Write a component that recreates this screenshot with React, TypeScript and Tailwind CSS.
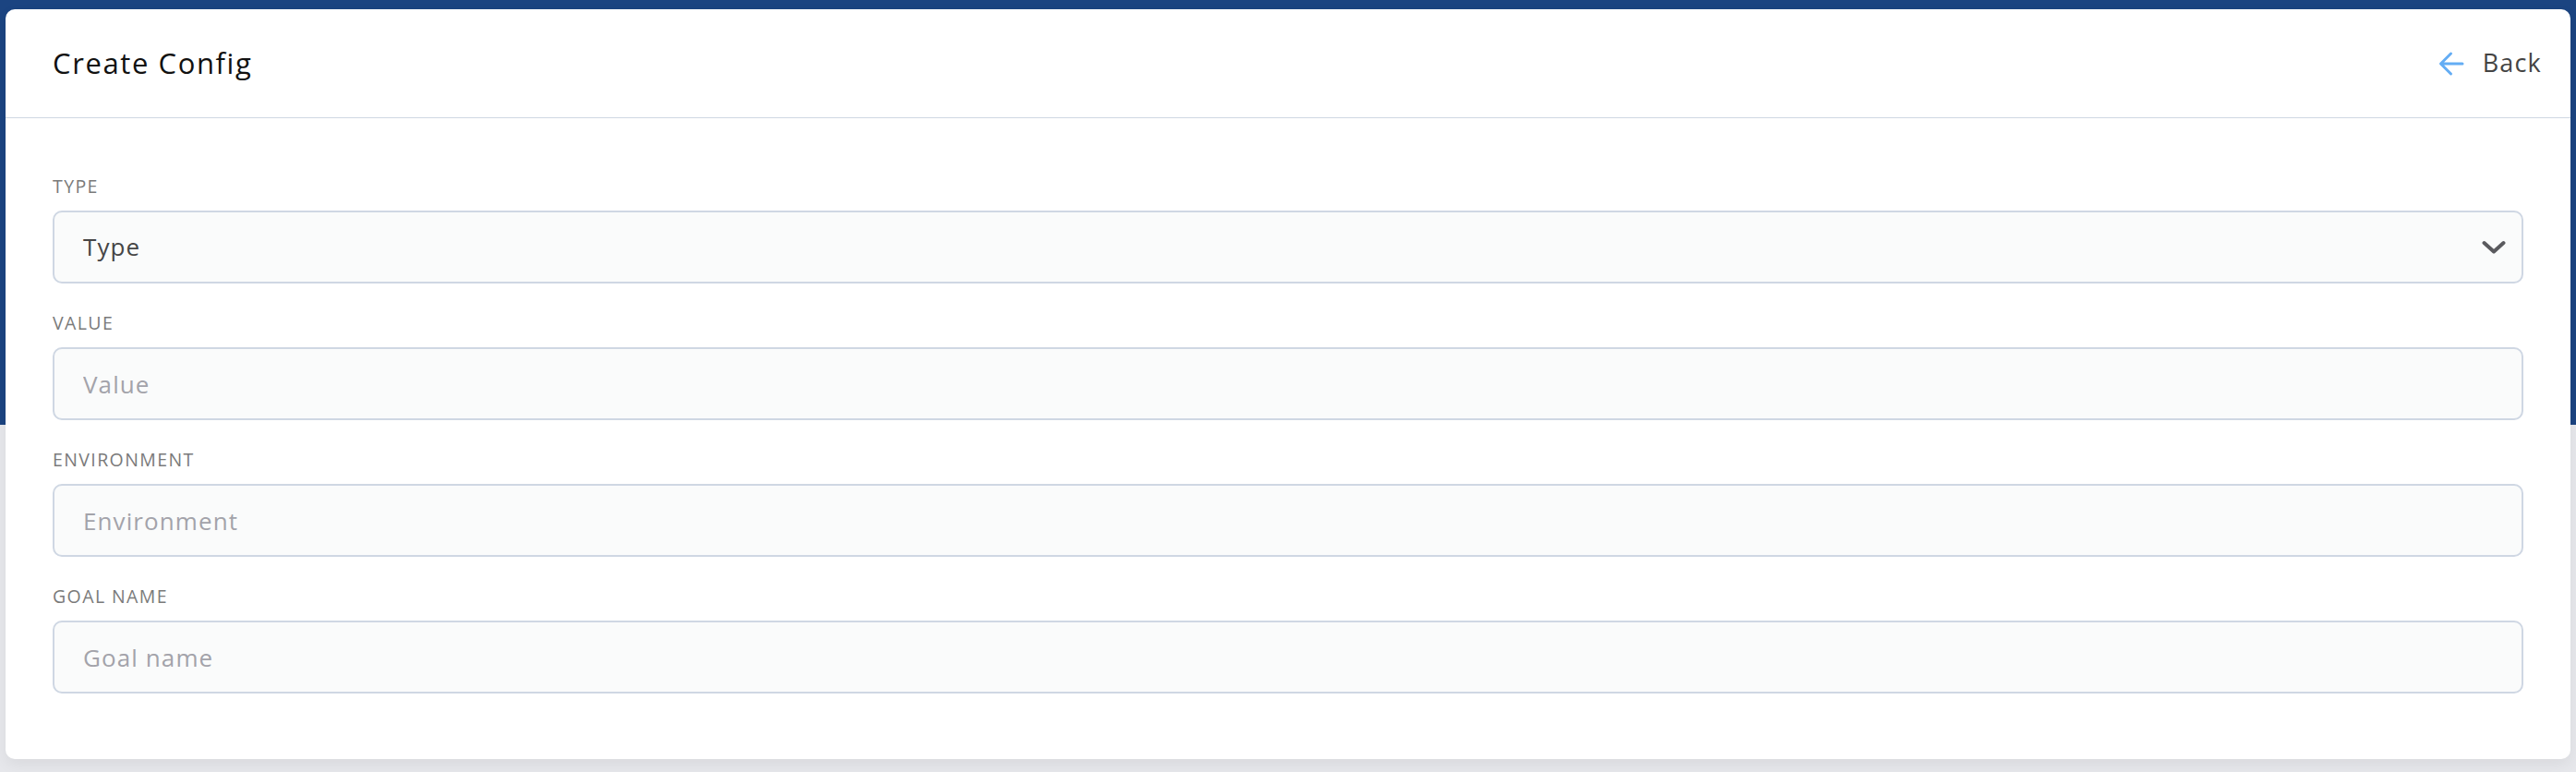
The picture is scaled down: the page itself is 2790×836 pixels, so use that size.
import React from "react";

const font = { fontFamily: '"Open Sans", "Noto Sans", sans-serif' };

function Field({ label, placeholder, select }: { label: string; placeholder: string; select?: boolean }) {
  return (
    <div className="flex flex-col">
      <label className="text-[19.5px] leading-[24px] text-[#7a7a7a] uppercase tracking-[1.4px] mb-[14px]">{label}</label>
      {select ? (
        <div className="h-[79px] rounded-[10px] border-2 border-[#cfd7e3] bg-[#fafbfb] flex items-center justify-between pl-[31px] pr-[17px]">
          <span className="text-[26px] tracking-[1.1px] text-[#454545]">{placeholder}</span>
          <svg width="26" height="16" viewBox="0 0 26 16" fill="none">
            <path d="M2.5 3 L13 12.5 L23.5 3" stroke="#5a5a5e" strokeWidth="4" strokeLinecap="round" strokeLinejoin="round" />
          </svg>
        </div>
      ) : (
        <input
          placeholder={placeholder}
          className="h-[79px] rounded-[10px] border-2 border-[#cfd7e3] bg-[#fafbfb] pl-[31px] pr-[20px] text-[26px] tracking-[1.1px] text-[#454545] placeholder:text-[#a3a3aa] outline-none"
          style={font}
        />
      )}
    </div>
  );
}

export default function App() {
  return (
    <div
      className="min-h-[836px] w-full pt-[10px] px-[6px] bg-[linear-gradient(to_bottom,#1b4481_0px,#1b4481_460px,#e6e7eb_460px,#e6e7eb_100%)]"
      style={font}
    >
      <div className="rounded-[10px] bg-white shadow-[0_6px_16px_rgba(0,0,0,0.06)] h-[812px] flex flex-col">
        <div className="h-[118px] flex items-center justify-between pl-[51px] pr-[31px] border-b-[1.5px] border-[#cfd8e3]">
          <h1 className="text-[31px] tracking-[1.6px] text-[#111] font-normal">Create Config</h1>
          <button className="flex items-center gap-[20px] text-[27px] tracking-[1.2px] text-[#444]">
            <svg width="28" height="28" viewBox="0 0 28 28" fill="none">
              <path d="M26 14 H3 M13.5 3 L2.5 14 L13.5 25" stroke="#64adf4" strokeWidth="3" strokeLinecap="round" strokeLinejoin="round" />
            </svg>
            <span>Back</span>
          </button>
        </div>
        <div className="flex flex-col gap-[31px] px-[51px] pt-[62px]">
          <Field label="Type" placeholder="Type" select />
          <Field label="Value" placeholder="Value" />
          <Field label="Environment" placeholder="Environment" />
          <Field label="Goal name" placeholder="Goal name" />
        </div>
      </div>
    </div>
  );
}
